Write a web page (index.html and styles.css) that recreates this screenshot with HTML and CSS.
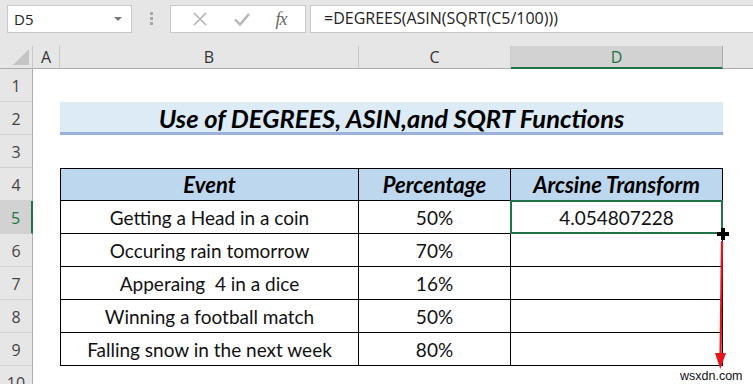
FILE: index.html
```html
<!DOCTYPE html>
<html lang="en">
<head>
  <meta charset="UTF-8">
  <title>DEGREES ASIN SQRT</title>
  <link rel="stylesheet" href="styles.css">
</head>
<body>
  <div class="topbar">
    <div class="namebox">
      <span>D5</span>
      <span class="caret"></span>
    </div>
    <div class="grip"><i></i><i></i><i></i></div>
    <div class="fxbox">
      <svg class="ico" width="16" height="16" viewBox="0 0 16 16"><path d="M2 2 L14 14 M14 2 L2 14" stroke="#b4b4b4" stroke-width="1.6" fill="none"/></svg>
      <svg class="ico" width="18" height="16" viewBox="0 0 18 16"><path d="M2 8.5 L7 13.5 L16 3" stroke="#b4b4b4" stroke-width="2.4" fill="none"/></svg>
      <span class="fx">fx</span>
    </div>
    <div class="formula">=DEGREES(ASIN(SQRT(C5/100)))</div>
  </div>

  <div class="sheet">
    <div class="corner"><span class="tri"></span></div>
    <div class="colhead">A</div>
    <div class="colhead">B</div>
    <div class="colhead">C</div>
    <div class="colhead active">D</div>
    <div class="colhead last"></div>

    <div class="rowhead">1</div>
    <div class="cell"></div><div class="cell"></div><div class="cell"></div><div class="cell"></div><div class="cell"></div>

    <div class="rowhead">2</div>
    <div class="cell"></div>
    <div class="title">Use of DEGREES, ASIN,and SQRT Functions</div>
    <div class="cell"></div>

    <div class="rowhead">3</div>
    <div class="cell"></div><div class="cell"></div><div class="cell"></div><div class="cell"></div><div class="cell"></div>

    <div class="rowhead">4</div>
    <div class="cell"></div>
    <div class="td th first">Event</div>
    <div class="td th">Percentage</div>
    <div class="td th">Arcsine Transform</div>
    <div class="cell"></div>

    <div class="rowhead active">5</div>
    <div class="cell"></div>
    <div class="td first">Getting a Head in a coin</div>
    <div class="td">50%</div>
    <div class="td sel">4.054807228</div>
    <div class="cell"></div>

    <div class="rowhead">6</div>
    <div class="cell"></div>
    <div class="td first">Occuring rain tomorrow</div>
    <div class="td">70%</div>
    <div class="td"></div>
    <div class="cell"></div>

    <div class="rowhead">7</div>
    <div class="cell"></div>
    <div class="td first">Apperaing&nbsp; 4 in a dice</div>
    <div class="td">16%</div>
    <div class="td"></div>
    <div class="cell"></div>

    <div class="rowhead">8</div>
    <div class="cell"></div>
    <div class="td first">Winning a football match</div>
    <div class="td">50%</div>
    <div class="td"></div>
    <div class="cell"></div>

    <div class="rowhead">9</div>
    <div class="cell"></div>
    <div class="td first">Falling snow in the next week</div>
    <div class="td">80%</div>
    <div class="td"></div>
    <div class="cell"></div>

    <div class="rowhead">10</div>
    <div class="cell"></div><div class="cell"></div><div class="cell"></div><div class="cell"></div><div class="cell"></div>

    <svg class="arrow" width="20" height="150" viewBox="0 0 20 150">
      <path d="M11 2 L9.5 120" stroke="#e8141b" stroke-width="2.2" fill="none"/>
      <path d="M4 114 L15 114 L9.3 130 Z" fill="#e8141b"/>
    </svg>
    <div class="mark">wsxdn.com</div>
  </div>
</body>
</html>
```

FILE: styles.css
```css
body { margin: 0; background: #fff; font-family: Lato, "Open Sans", sans-serif; overflow: hidden; }

.topbar {
  display: flex;
  align-items: flex-start;
  height: 46px;
  background: #e6e6e6;
  padding: 5px 0 0 7px;
  box-sizing: border-box;
}
.namebox {
  width: 125px;
  height: 28px;
  box-sizing: border-box;
  background: #fff;
  border: 1px solid #c8c8c8;
  display: flex;
  align-items: center;
  justify-content: space-between;
  padding: 0 9px 0 6px;
  font-family: "Open Sans", sans-serif;
  font-size: 15px;
  color: #222;
}
.caret {
  width: 0; height: 0;
  border-left: 4px solid transparent;
  border-right: 4px solid transparent;
  border-top: 4px solid #777;
}
.grip {
  width: 38px;
  display: flex;
  flex-direction: column;
  align-items: center;
  gap: 2px;
  padding-top: 7px;
}
.grip i { display: block; width: 3px; height: 3px; background: #a8a8a8; }
.fxbox {
  width: 136px;
  height: 28px;
  box-sizing: border-box;
  background: #fff;
  border: 1px solid #c8c8c8;
  display: flex;
  align-items: center;
  justify-content: space-around;
  padding: 0 6px 0 8px;
}
.fx {
  font-family: "Liberation Serif", serif;
  font-style: italic;
  font-size: 18px;
  color: #666;
  letter-spacing: -1px;
}
.formula {
  flex: 1;
  height: 28px;
  margin-left: 4px;
  box-sizing: border-box;
  background: #fff;
  border: 1px solid #c8c8c8;
  border-right: none;
  padding: 0 0 0 13px;
  font-family: "Open Sans", sans-serif;
  font-size: 16px;
  line-height: 25px;
  color: #222;
}

.sheet {
  position: relative;
  display: grid;
  grid-template-columns: 33px 27px 299px 152px 212px 30px;
  grid-template-rows: 23px repeat(10, 33px);
}
.corner {
  background: #e6e6e6;
  border-right: 1px solid #c8c8c8;
  border-bottom: 1px solid #ababab;
  display: flex;
  align-items: flex-end;
  justify-content: flex-end;
  padding: 0 3px 3px 0;
}
.tri {
  width: 0; height: 0;
  border-left: 16px solid transparent;
  border-bottom: 16px solid #c4c4c4;
}
.colhead {
  background: #e6e6e6;
  border-right: 1px solid #c8c8c8;
  border-bottom: 1px solid #ababab;
  text-align: center;
  font-family: "Open Sans", sans-serif;
  font-size: 16px;
  line-height: 22px;
  color: #333;
}
.colhead.active {
  background: #d2d2d2;
  color: #217346;
  border-bottom: 2px solid #217346;
  border-right-color: #ababab;
}
.colhead.last { border-right: none; }
.rowhead {
  background: #e6e6e6;
  border-right: 1px solid #ababab;
  border-bottom: 1px solid #d0d0d0;
  text-align: center;
  font-family: "Open Sans", sans-serif;
  font-size: 16px;
  line-height: 34px;
  color: #444;
}
.rowhead.active {
  background: #d2d2d2;
  border-right: 2px solid #217346;
  color: #217346;
}
.cell { background: #fff; }

.title {
  grid-column: 3 / 6;
  background: #ddebf7;
  border-bottom: 3px solid #9bb2d8;
  text-align: center;
  font-weight: bold;
  font-style: italic;
  font-size: 25.5px;
  line-height: 32px;
  color: #000;
}

.td {
  border-right: 1px solid #000;
  border-bottom: 1px solid #000;
  text-align: center;
  font-size: 19px;
  line-height: 33px;
  color: #111;
  position: relative;
}
.td.first { border-left: 1px solid #000; }
.th {
  border-top: 1px solid #000;
  background: #bdd7ee;
  font-weight: bold;
  font-style: italic;
  font-size: 22px;
  line-height: 31px;
  color: #000;
}
.td.sel::after {
  content: "";
  position: absolute;
  left: -1px; top: -1px; right: -1px; bottom: -1px;
  border: 2px solid #217346;
}
.td.sel::before {
  content: "";
  position: absolute;
  right: -7px;
  bottom: -7px;
  width: 12px;
  height: 12px;
  z-index: 2;
  background:
    linear-gradient(#000, #000) center / 12px 4px no-repeat,
    linear-gradient(#000, #000) center / 4px 12px no-repeat;
}

.arrow { position: absolute; left: 711px; top: 193px; }
.mark {
  position: absolute;
  left: 680px;
  top: 323px;
  font-family: "Liberation Sans", Arial, sans-serif;
  font-size: 12.5px;
  color: #111;
}
```
